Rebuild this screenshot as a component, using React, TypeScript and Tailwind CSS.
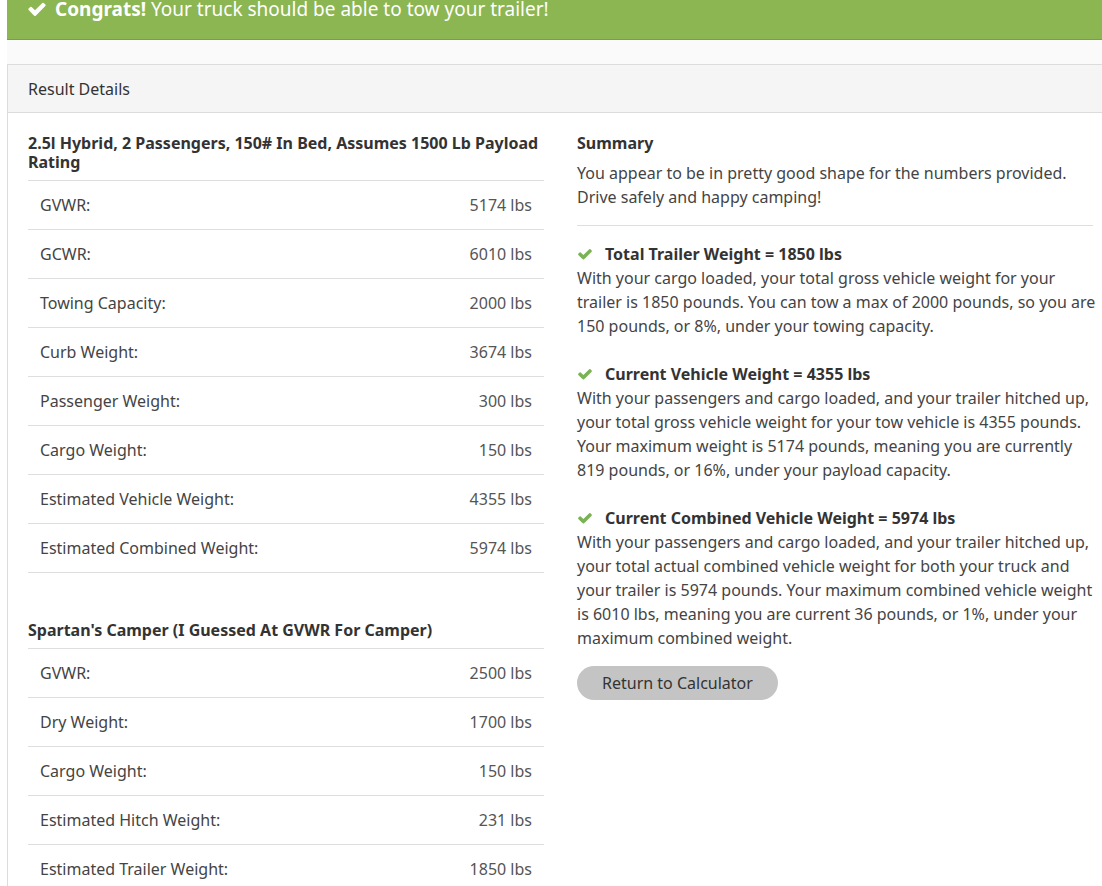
import React from 'react';

interface Row {
  label: string;
  value: string;
}

interface Section {
  title: string;
  rows: Row[];
}

const sections: Section[] = [
  {
    title: '2.5l Hybrid, 2 Passengers, 150# In Bed, Assumes 1500 Lb Payload Rating',
    rows: [
      { label: 'GVWR:', value: '5174 lbs' },
      { label: 'GCWR:', value: '6010 lbs' },
      { label: 'Towing Capacity:', value: '2000 lbs' },
      { label: 'Curb Weight:', value: '3674 lbs' },
      { label: 'Passenger Weight:', value: '300 lbs' },
      { label: 'Cargo Weight:', value: '150 lbs' },
      { label: 'Estimated Vehicle Weight:', value: '4355 lbs' },
      { label: 'Estimated Combined Weight:', value: '5974 lbs' },
    ],
  },
  {
    title: "Spartan's Camper (I Guessed At GVWR For Camper)",
    rows: [
      { label: 'GVWR:', value: '2500 lbs' },
      { label: 'Dry Weight:', value: '1700 lbs' },
      { label: 'Cargo Weight:', value: '150 lbs' },
      { label: 'Estimated Hitch Weight:', value: '231 lbs' },
      { label: 'Estimated Trailer Weight:', value: '1850 lbs' },
    ],
  },
];

const checks = [
  {
    title: 'Total Trailer Weight = 1850 lbs',
    text: 'With your cargo loaded, your total gross vehicle weight for your trailer is 1850 pounds. You can tow a max of 2000 pounds, so you are 150 pounds, or 8%, under your towing capacity.',
  },
  {
    title: 'Current Vehicle Weight = 4355 lbs',
    text: 'With your passengers and cargo loaded, and your trailer hitched up, your total gross vehicle weight for your tow vehicle is 4355 pounds. Your maximum weight is 5174 pounds, meaning you are currently 819 pounds, or 16%, under your payload capacity.',
  },
  {
    title: 'Current Combined Vehicle Weight = 5974 lbs',
    text: 'With your passengers and cargo loaded, and your trailer hitched up, your total actual combined vehicle weight for both your truck and your trailer is 5974 pounds. Your maximum combined vehicle weight is 6010 lbs, meaning you are current 36 pounds, or 1%, under your maximum combined weight.',
  },
];

// font-awesome style check mark
const Check = ({ className }: { className?: string }) => (
  <svg viewBox="0 0 1792 1792" className={className} fill="currentColor">
    <path d="M1671 566q0 40-28 68l-724 724-136 136q-28 28-68 28t-68-28l-136-136-362-362q-28-28-28-68t28-68l136-136q28-28 68-28t68 28l294 295 656-657q28-28 68-28t68 28l136 136q28 28 28 68z" />
  </svg>
);

const App: React.FC = () => {
  return (
    <div
      className="min-h-[886px] bg-white text-[#444] overflow-hidden"
      style={{ fontFamily: '"Noto Sans", "Open Sans", Arial, sans-serif' }}
    >
      <div className="ml-[7px] w-[1120px] bg-[#fafafa]">
        <div className="-mt-[17px] pt-[12px] pb-[16px] pl-[20px] bg-[#8cb651] border-b border-[#76a044] text-white text-[19px] leading-[28px] flex items-center">
          <Check className="w-[20px] h-[20px] mr-[8px]" />
          <span>
            <b className="font-bold">Congrats!</b> Your truck should be able to tow your trailer!
          </span>
        </div>
        <div className="h-[24px]" />

        <div className="border border-[#dcdcdc] bg-white">
          <div className="h-[48px] bg-[#f5f5f5] border-b border-[#dcdcdc] px-[20px] flex items-center text-[16px] text-[#333]">
            Result Details
          </div>

          <div className="flex gap-[33px] px-[20px] pt-[21px] pb-[40px]">
            {/* weight tables */}
            <div className="w-[516px] shrink-0 flex flex-col gap-[48px]">
              {sections.map((s) => (
                <div key={s.title}>
                  <h3 className="font-bold text-[16px] leading-[19px] text-[#333] pb-[8px]">{s.title}</h3>
                  {s.rows.map((r) => (
                    <div
                      key={r.label}
                      className="flex justify-between border-t border-[#dedede] last:border-b px-[12px] py-[12px] text-[16px] leading-6"
                    >
                      <span>{r.label}</span>
                      <span className="text-[#555]">{r.value}</span>
                    </div>
                  ))}
                </div>
              ))}
            </div>

            {/* summary */}
            <div className="w-[520px] shrink-0 text-[16px] leading-6">
              <h3 className="font-bold text-[#333] leading-[19px]">Summary</h3>
              <p className="mt-[8px] pr-[4px]">
                You appear to be in pretty good shape for the numbers provided. Drive safely and happy camping!
              </p>
              <hr className="mt-[16px] mr-[4px] border-[#dedede]" />
              <div className="mt-[16px] flex flex-col gap-[24px]">
                {checks.map((c) => (
                  <div key={c.title}>
                    <div className="flex items-center font-bold text-[#333]">
                      <Check className="w-[16px] h-[16px] text-[#79b355] mr-[12px]" />
                      {c.title}
                    </div>
                    <p>{c.text}</p>
                  </div>
                ))}
              </div>
              <button className="mt-[16px] h-[34px] px-[25px] rounded-full bg-[#c4c4c4] text-[#333] text-[16px]">
                Return to Calculator
              </button>
            </div>
          </div>
        </div>
      </div>
    </div>
  );
};

export default App;
